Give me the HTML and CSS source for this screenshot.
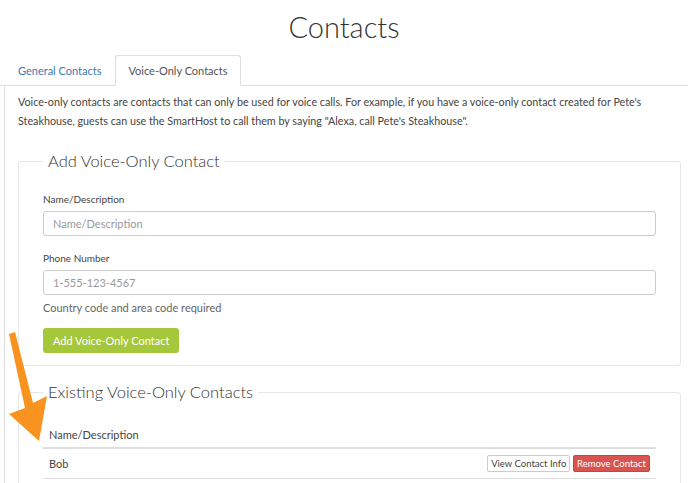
FILE: index.html
```html
<!DOCTYPE html>
<html lang="en">
<head>
    <meta charset="UTF-8">
    <meta name="viewport" content="width=device-width, initial-scale=1.0">
    <title>Contacts</title>
    <link rel="stylesheet" href="styles.css">
</head>
<body>
    <h1 class="page-title">Contacts</h1>

    <ul class="tabs">
        <li class="tab"><a href="#">General Contacts</a></li>
        <li class="tab active"><a href="#">Voice-Only Contacts</a></li>
    </ul>

    <div class="tab-panel">
        <p class="intro">
            Voice-only contacts are contacts that can only be used for voice calls. For example, if you have a voice-only contact created for Pete's
            Steakhouse, guests can use the SmartHost to call them by saying "Alexa, call Pete's Steakhouse".
        </p>

        <fieldset class="box box-form">
            <legend>Add Voice-Only Contact</legend>
            <div class="field">
                <label>Name/Description</label>
                <input type="text" placeholder="Name/Description">
            </div>
            <div class="field field-last">
                <label>Phone Number</label>
                <input type="text" placeholder="1-555-123-4567">
                <div class="help">Country code and area code required</div>
            </div>
            <button class="btn btn-green">Add Voice-Only Contact</button>
        </fieldset>

        <fieldset class="box">
            <legend>Existing Voice-Only Contacts</legend>
            <table class="contacts">
                <thead>
                    <tr><th>Name/Description</th><th></th></tr>
                </thead>
                <tbody>
                    <tr>
                        <td>Bob</td>
                        <td class="actions">
                            <button class="btn btn-small btn-white">View Contact Info</button>
                            <button class="btn btn-small btn-red">Remove Contact</button>
                        </td>
                    </tr>
                </tbody>
            </table>
        </fieldset>
    </div>

    <!-- callout arrow drawn over the page -->
    <svg class="arrow" viewBox="0 320 60 130" width="60" height="130">
        <polygon points="9,334 15,332 33,403 47,396 39,441 9,414 25,408" fill="#f7931e"/>
    </svg>
</body>
</html>
```

FILE: styles.css
```css
* {
    box-sizing: border-box;
}

body {
    margin: 0;
    font-family: Lato, 'Open Sans', sans-serif;
    color: #444;
    background: #fff;
    overflow: hidden;
}

.page-title {
    margin: 0;
    padding-top: 9px;
    height: 55px;
    text-align: center;
    font-size: 29px;
    font-weight: 300;
    color: #333;
}

.tabs {
    list-style: none;
    margin: 0;
    padding: 0 0 0 5px;
    display: flex;
    border-bottom: 1px solid #ddd;
}

.tab {
    margin-right: 1px;
    margin-bottom: -1px;
}

.tab a {
    display: block;
    padding: 0 12px;
    height: 31px;
    line-height: 29px;
    font-size: 11px;
    color: #3f78b3;
    text-decoration: none;
    border: 1px solid transparent;
    border-radius: 3px 3px 0 0;
}

.tab.active a {
    color: #555;
    background: #fff;
    border-color: #ddd #ddd transparent;
}

.tab-panel {
    margin-left: 4px;
    border-left: 1px solid #ddd;
    padding: 6px 7px 0 13px;
}

.intro {
    margin: 0 0 21px;
    font-size: 10.75px;
    line-height: 19px;
    color: #444;
}

.box {
    margin: 0 0 16px;
    border: 1px solid #e6e6e6;
    border-radius: 3px;
    padding: 10px 24px 12px;
    min-width: 0;
}

.box-form {
    padding-top: 21px;
}

.box legend {
    margin-left: 0;
    padding: 0 5px;
    font-size: 16.5px;
    line-height: 20px;
    font-weight: 300;
    color: #333;
}

.field {
    margin-bottom: 15px;
}

.field-last {
    margin-bottom: 13px;
}

.field label {
    display: block;
    font-size: 10px;
    line-height: 14px;
    margin-bottom: 5px;
    color: #444;
}

.field input {
    display: block;
    width: 100%;
    height: 25px;
    padding: 0 9px;
    border: 1px solid #ccc;
    border-radius: 3px;
    font-family: inherit;
    font-size: 11px;
    color: #555;
}

.field input::placeholder {
    color: #999;
}

.help {
    margin-top: 6px;
    font-size: 11px;
    line-height: 14px;
    color: #666;
}

.btn {
    font-family: inherit;
    border: 1px solid transparent;
    border-radius: 3px;
    cursor: pointer;
}

.btn-green {
    height: 25px;
    padding: 0 9px;
    font-size: 11px;
    color: #fff;
    background: #a5c83a;
}

.btn-small {
    height: 17px;
    padding: 0 3px;
    font-size: 9.5px;
    border-radius: 2px;
}

.btn-white {
    background: #fff;
    border-color: #ccc;
    color: #444;
}

.btn-red {
    background: #d9534f;
    border-color: #d43f3a;
    color: #fff;
}

.contacts {
    width: 100%;
    border-collapse: collapse;
    margin-top: 9px;
    font-size: 11px;
}

.contacts th {
    text-align: left;
    font-weight: 400;
    padding: 6px;
    border-bottom: 2px solid #ddd;
    height: 27px;
}

.contacts td {
    padding: 3px 6px;
    height: 30px;
    border-bottom: 1px solid #ddd;
}

.contacts .actions {
    text-align: right;
    white-space: nowrap;
}

.arrow {
    position: absolute;
    left: 0;
    top: 320px;
}
```
